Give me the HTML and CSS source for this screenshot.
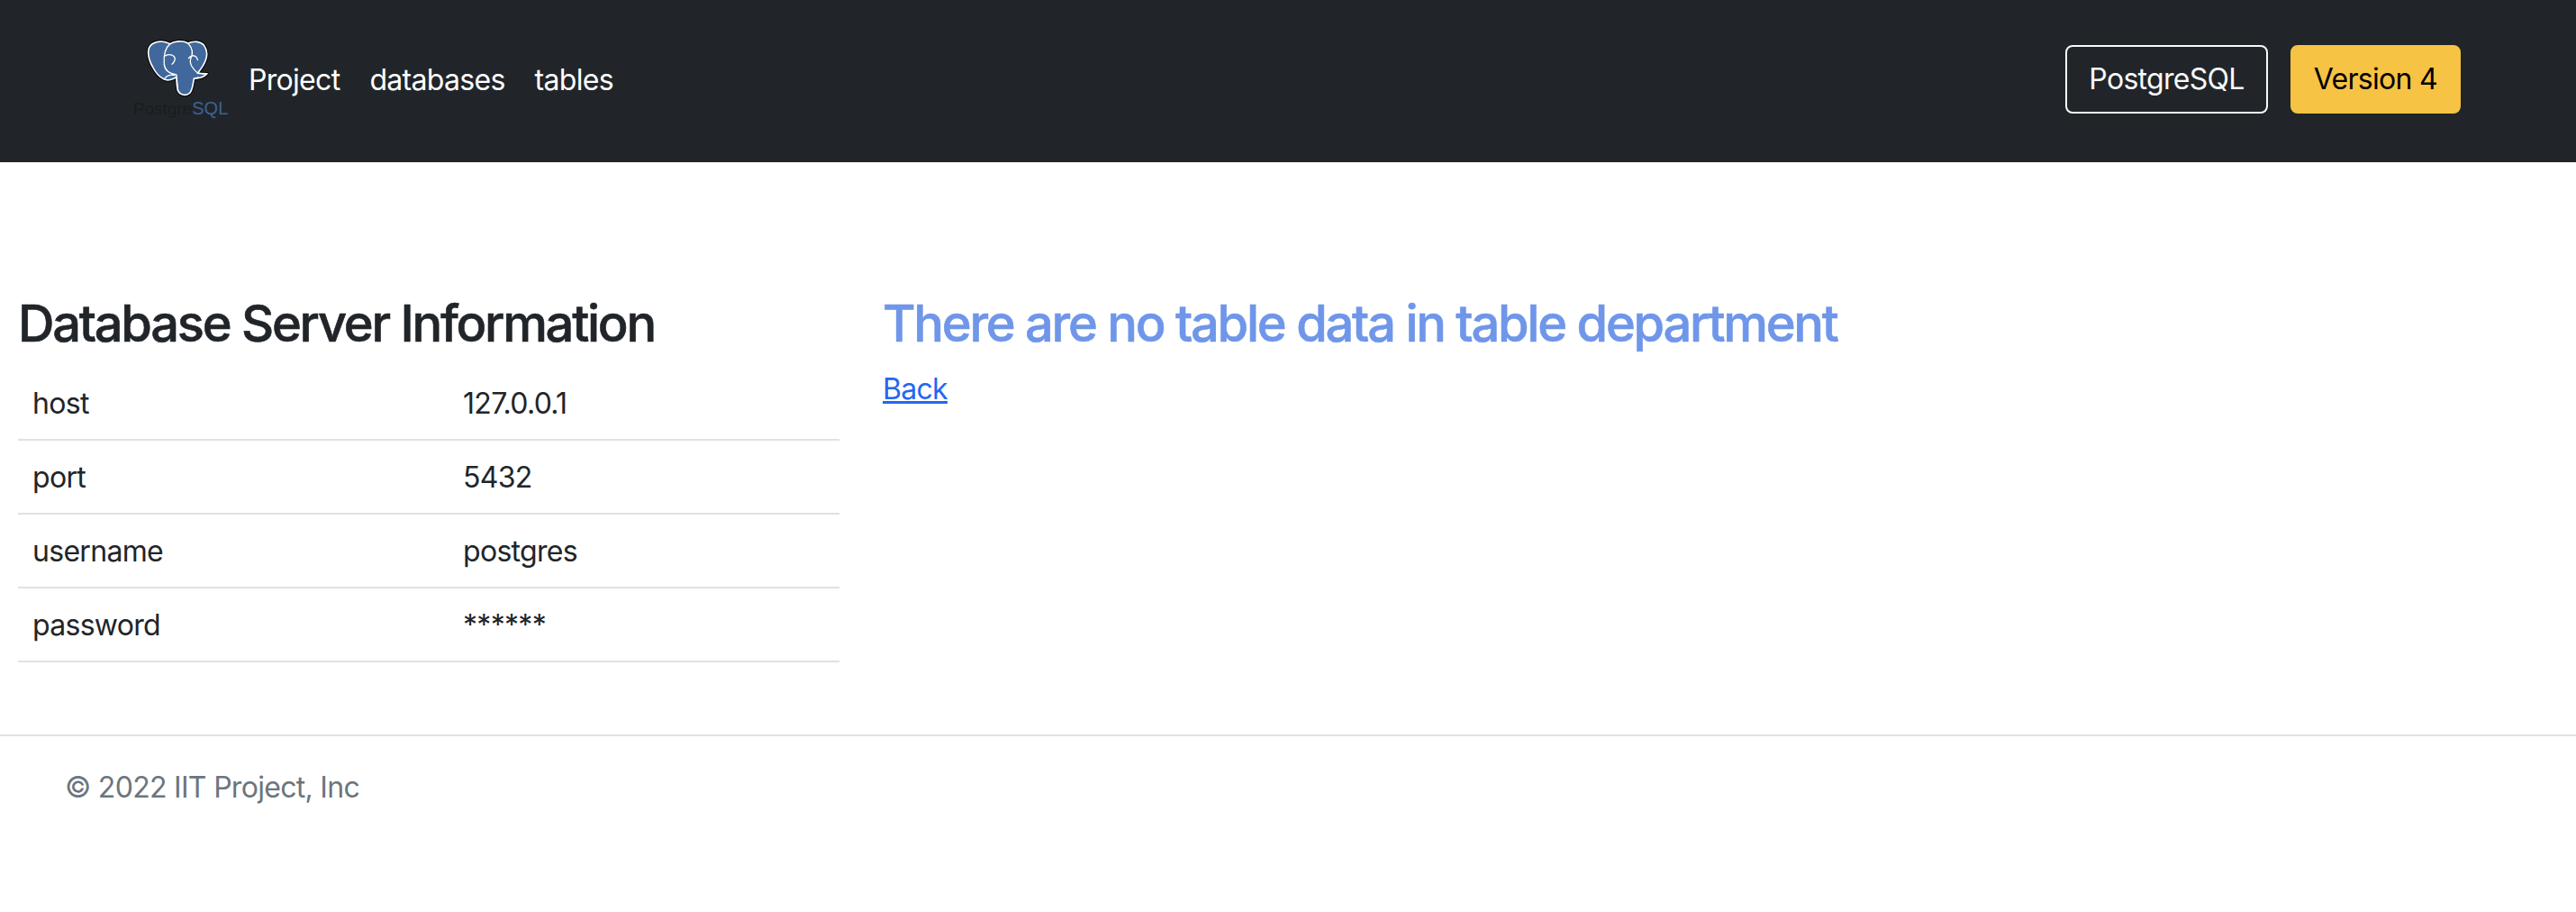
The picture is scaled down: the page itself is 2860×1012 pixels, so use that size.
FILE: index.html
```html
<!DOCTYPE html>
<html lang="en">
<head>
<meta charset="utf-8">
<title>Database Server Information</title>
<link rel="stylesheet" href="styles.css">
</head>
<body>
<header class="navbar">
  <div class="brand">
    <a class="logo" href="#">
      <svg class="elephant" viewBox="130 70 208 200" width="69" height="67" aria-hidden="true">
        <path class="el-outline" d="M135 118C136 95 155 84 178 84C192 84 200 88 208 92C222 82 250 80 268 90C285 82 310 82 322 98C336 118 332 142 318 165C312 175 306 183 300 190C310 192 322 192 332 192C322 203 305 208 288 208C284 225 284 248 272 258C258 268 240 262 234 248C230 235 230 218 229 203C218 212 200 216 188 211C176 205 160 190 150 170C140 152 134 135 135 118Z"/>
        <path class="el-body" d="M135 118C136 95 155 84 178 84C192 84 200 88 208 92C222 82 250 80 268 90C285 82 310 82 322 98C336 118 332 142 318 165C312 175 306 183 300 190C310 192 322 192 332 192C322 203 305 208 288 208C284 225 284 248 272 258C258 268 240 262 234 248C230 235 230 218 229 203C218 212 200 216 188 211C176 205 160 190 150 170C140 152 134 135 135 118Z"/>
        <path class="el-line" d="M208 92C192 105 186 130 188 160C190 180 205 192 229 195L234 248M268 90C282 105 286 125 276 145C272 158 284 175 300 190M192 132C205 124 226 130 224 145C222 152 218 157 214 160M270 140C280 128 296 128 300 146M190 208C196 198 210 194 222 197M290 208L302 204"/>
      </svg>
      <span class="wordmark">Postgre<span class="wordmark-sql">SQL</span></span>
    </a>
    <nav class="nav">
      <a href="#">Project</a>
      <a href="#">databases</a>
      <a href="#">tables</a>
    </nav>
  </div>
  <div class="actions">
    <button class="btn btn-outline" type="button">PostgreSQL</button>
    <button class="btn btn-warning" type="button">Version 4</button>
  </div>
</header>
<main class="content">
  <section class="info">
    <h3 class="heading">Database Server Information</h3>
    <table class="table">
      <tr><td class="key">host</td><td>127.0.0.1</td></tr>
      <tr><td class="key">port</td><td>5432</td></tr>
      <tr><td class="key">username</td><td>postgres</td></tr>
      <tr><td class="key">password</td><td>******</td></tr>
    </table>
  </section>
  <section class="result">
    <h3 class="heading heading-primary">There are no table data in table department</h3>
    <a class="back" href="#">Back</a>
  </section>
</main>
<footer class="footer">
  <p class="copyright">© 2022 IIT Project, Inc</p>
</footer>
</body>
</html>
```
FILE: styles.css
```css
* { box-sizing: border-box; }
html, body { margin: 0; padding: 0; }
body {
  font-family: Inter, "Liberation Sans", sans-serif;
  font-size: 32px;
  line-height: 48px;
  letter-spacing: -0.7px;
  color: #212529;
  background: #fff;
}
.navbar {
  height: 180px;
  background: #212529;
  display: flex;
  align-items: center;
  justify-content: space-between;
  padding: 0 128px 4px 150px;
}
.brand { display: flex; align-items: center; }
.logo {
  width: 104px;
  height: 100px;
  margin-right: 22px;
  display: flex;
  flex-direction: column;
  align-items: center;
  text-decoration: none;
}
.elephant { display: block; margin-top: 3px; margin-right: 9px; flex: none; }
.el-outline { fill: #000; stroke: #000; stroke-width: 11; stroke-linejoin: round; }
.el-body { fill: #40689c; stroke: #fff; stroke-width: 5; stroke-linejoin: round; }
.el-line { fill: none; stroke: #fff; stroke-width: 4; stroke-linecap: round; stroke-linejoin: round; }
.wordmark {
  font-family: "Liberation Sans", Arial, sans-serif;
  font-size: 19px;
  line-height: 24px;
  letter-spacing: 0;
  margin-right: 3px;
  color: #1a1c1f;
  white-space: nowrap;
}
.wordmark-sql { color: #3d6296; font-size: 20px; }
.nav { display: flex; gap: 33px; padding-top: 1px; }
.nav a { color: #fff; text-decoration: none; }
.actions { display: flex; gap: 25px; }
.btn {
  font: inherit;
  letter-spacing: inherit;
  height: 76px;
  padding: 0 24px;
  border-radius: 8px;
  border: 2px solid transparent;
}
.btn-outline { background: transparent; border-color: #f8f9fa; color: #f8f9fa; }
.btn-warning { background: #f6c344; border-color: #f6c344; color: #000; }
.content {
  display: flex;
  align-items: flex-start;
  padding: 144px 0 0 20px;
  height: 637px;
  border-bottom: 2px solid #dee2e6;
}
.info { width: 912px; margin-right: 48px; }
.heading {
  margin: 0 0 13px;
  font-size: 56px;
  line-height: 70px;
  font-weight: 500;
  letter-spacing: -2.25px;
  -webkit-text-stroke: 0.6px currentColor;
}
.heading-primary { color: #6f96e8; }
.table { width: 100%; border-collapse: collapse; }
.table td {
  padding: 17px 16px 15px;
  border-bottom: 2px solid #dee2e6;
  color: #212529;
}
.table .key { width: 478px; }
.back { display: inline-block; margin-top: 1px; color: #2566f2; }
.footer { padding: 33px 72px; }
.copyright { margin: 0; color: #6c757d; }
```
